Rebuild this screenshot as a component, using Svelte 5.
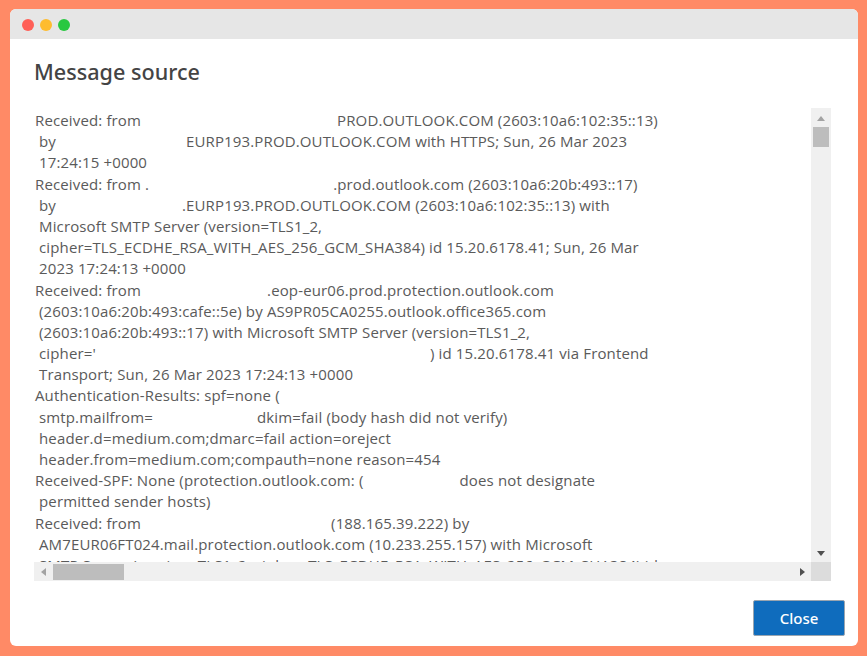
<script>
  // each line: [indented, text, gap in px, text after the gap]
  const lines = [
    [0, 'Received: from', 196, 'PROD.OUTLOOK.COM (2603:10a6:102:35::13)'],
    [1, 'by', 130, 'EURP193.PROD.OUTLOOK.COM with HTTPS; Sun, 26 Mar 2023'],
    [1, '17:24:15 +0000'],
    [0, 'Received: from .', 184, '.prod.outlook.com (2603:10a6:20b:493::17)'],
    [1, 'by', 126, '.EURP193.PROD.OUTLOOK.COM (2603:10a6:102:35::13) with'],
    [1, 'Microsoft SMTP Server (version=TLS1_2,'],
    [1, 'cipher=TLS_ECDHE_RSA_WITH_AES_256_GCM_SHA384) id 15.20.6178.41; Sun, 26 Mar'],
    [1, '2023 17:24:13 +0000'],
    [0, 'Received: from', 126, '.eop-eur06.prod.protection.outlook.com'],
    [1, '(2603:10a6:20b:493:cafe::5e) by AS9PR05CA0255.outlook.office365.com'],
    [1, '(2603:10a6:20b:493::17) with Microsoft SMTP Server (version=TLS1_2,'],
    [1, "cipher='", 334, ') id 15.20.6178.41 via Frontend'],
    [1, 'Transport; Sun, 26 Mar 2023 17:24:13 +0000'],
    [0, 'Authentication-Results: spf=none ('],
    [1, 'smtp.mailfrom=', 104, 'dkim=fail (body hash did not verify)'],
    [1, 'header.d=medium.com;dmarc=fail action=oreject'],
    [1, 'header.from=medium.com;compauth=none reason=454'],
    [0, 'Received-SPF: None (protection.outlook.com: (', 96, 'does not designate'],
    [1, 'permitted sender hosts)'],
    [0, 'Received: from', 190, '(188.165.39.222) by'],
    [1, 'AM7EUR06FT024.mail.protection.outlook.com (10.233.255.157) with Microsoft'],
    [1, 'SMTP Server (version=TLS1_2, cipher=TLS_ECDHE_RSA_WITH_AES_256_GCM_SHA384) id'],
  ];
</script>

<div class="page">
  <div class="dialog">
    <div class="titlebar">
      <span class="dot red"></span>
      <span class="dot yellow"></span>
      <span class="dot green"></span>
    </div>
    <div class="body">
      <h1>Message source</h1>
      <div class="source">
        <div class="text">
          {#each lines as [indent, first, gap, rest]}
            <div class="line" class:indent={indent}>{first}{#if gap}<span class="gap" style="width: {gap}px"></span>{rest}{/if}</div>
          {/each}
        </div>
        <div class="vbar">
          <span class="arrow up"></span>
          <span class="vthumb"></span>
          <span class="arrow down"></span>
        </div>
        <div class="hbar">
          <span class="arrow left"></span>
          <span class="hthumb"></span>
          <span class="arrow right"></span>
        </div>
        <div class="corner"></div>
      </div>
      <div class="footer">
        <button>Close</button>
      </div>
    </div>
  </div>
</div>

<style>
  :global(body) {
    margin: 0;
  }
  .page {
    width: 867px;
    height: 656px;
    box-sizing: border-box;
    padding: 9px 9px 10px 10px;
    background: #ff8a66;
    font-family: "Open Sans", "Noto Sans", sans-serif;
  }
  .dialog {
    height: 100%;
    display: flex;
    flex-direction: column;
    background: #fff;
    border-radius: 6px;
    overflow: hidden;
  }
  .titlebar {
    height: 30px;
    box-sizing: border-box;
    flex: none;
    display: flex;
    align-items: center;
    gap: 6px;
    padding: 2px 0 0 12px;
    background: #e6e6e6;
  }
  .dot {
    width: 12px;
    height: 12px;
    border-radius: 50%;
  }
  .red { background: #ff5f57; }
  .yellow { background: #febc2e; }
  .green { background: #28c840; }
  .body {
    flex: 1;
    display: flex;
    flex-direction: column;
    padding: 19px 13px 10px 24px;
  }
  h1 {
    margin: 0 0 22px 0;
    font-size: 21.6px;
    line-height: 28px;
    font-weight: 500;
    color: #444;
    font-family: "Noto Sans", sans-serif;
  }
  .source {
    width: 797px;
    height: 473px;
    display: grid;
    grid-template-columns: 777px 20px;
    grid-template-rows: 454px 19px;
  }
  .text {
    overflow: hidden;
    padding: 2px 0 0 1px;
    font-size: 15px;
    line-height: 21.2px;
    color: #5a5a5a;
    letter-spacing: 0.14px;
    white-space: nowrap;
  }
  .line {
    height: 21.2px;
  }
  .indent {
    padding-left: 4px;
  }
  .gap {
    display: inline-block;
  }
  .vbar {
    display: flex;
    flex-direction: column;
    align-items: center;
    background: #f0f0f0;
    padding-top: 8px;
  }
  .vthumb {
    width: 16px;
    height: 20px;
    margin-top: 6px;
    background: #bdbdbd;
  }
  .hbar {
    display: flex;
    align-items: center;
    background: #f0f0f0;
    padding: 0 6px 0 7px;
  }
  .hthumb {
    width: 71px;
    height: 16px;
    margin-left: 7px;
    background: #bdbdbd;
  }
  .corner {
    background: #dcdcdc;
  }
  .arrow {
    width: 0;
    height: 0;
    flex: none;
    border: 4px solid transparent;
  }
  .up {
    border-top: 0;
    border-bottom: 5px solid #a3a3a3;
  }
  .down {
    margin-top: auto;
    margin-bottom: 6px;
    border-bottom: 0;
    border-top: 5px solid #505050;
  }
  .left {
    border-left: 0;
    border-right: 5px solid #a3a3a3;
  }
  .right {
    margin-left: auto;
    border-right: 0;
    border-left: 5px solid #505050;
  }
  .footer {
    margin-top: auto;
    display: flex;
    justify-content: flex-end;
  }
  button {
    width: 92px;
    height: 36px;
    padding: 0;
    border: 1px solid #9aa5b0;
    border-radius: 2px;
    background: #0f6cbd;
    color: #fff;
    font-family: "Noto Sans", sans-serif;
    font-size: 15px;
    font-weight: 500;
  }
</style>
